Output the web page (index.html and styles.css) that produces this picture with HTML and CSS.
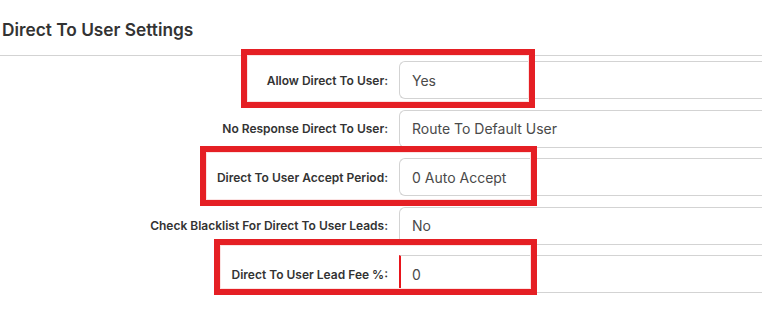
FILE: index.html
```html
<!DOCTYPE html>
<html>
<head>
<meta charset="utf-8">
<link rel="stylesheet" href="styles.css">
</head>
<body>
<div class="page">
  <h2 class="title">Direct To User Settings</h2>
  <div class="form">
    <label class="lbl">Allow Direct To User:</label>
    <div class="field">Yes</div>
    <label class="lbl">No Response Direct To User:</label>
    <div class="field">Route To Default User</div>
    <label class="lbl">Direct To User Accept Period:</label>
    <div class="field">0 Auto Accept</div>
    <label class="lbl">Check Blacklist For Direct To User Leads:</label>
    <div class="field">No</div>
    <label class="lbl">Direct To User Lead Fee %:</label>
    <div class="field field-error">0</div>
  </div>
  <div class="mark mark1"></div>
  <div class="mark mark2"></div>
  <div class="mark mark3"></div>
</div>
</body>
</html>
```
FILE: styles.css
```css
html, body {
  margin: 0;
  padding: 0;
  background: #fff;
  overflow: hidden;
}
.page {
  position: relative;
  width: 762px;
  height: 310px;
  overflow: hidden;
  font-family: Inter, "Noto Sans", sans-serif;
  color: #333;
}
.title {
  margin: 0;
  padding: 19px 0 0 2px;
  height: 36px;
  box-sizing: border-box;
  height: 56px;
  font-size: 17.3px;
  font-weight: 600;
  line-height: 22px;
  color: #333;
  border-bottom: 1px solid #d3d3d3;
}
.form {
  display: grid;
  grid-template-columns: 388px 1fr;
  column-gap: 11px;
  row-gap: 10.5px;
  padding-top: 5px;
}
.lbl {
  display: flex;
  align-items: center;
  justify-content: flex-end;
  font-size: 12px;
  font-weight: 600;
  color: #333;
}
.field {
  box-sizing: border-box;
  height: 38px;
  border: 1px solid #d3d3d3;
  border-right: none;
  border-radius: 6px 0 0 6px;
  padding: 0 12px;
  display: flex;
  align-items: center;
  font-size: 14px;
  color: #4a4a4a;
}
.field-error {
  border-left: 2px solid #e8141b;
  border-radius: 0;
  padding-left: 11px;
}
.mark {
  position: absolute;
  box-sizing: border-box;
  border: 6px solid #e51f24;
  box-shadow: inset 0 0 0 1px #fbe3e3;
}
.mark1 { left: 241px; top: 49px; width: 294px; height: 59px; }
.mark2 { left: 200px; top: 146px; width: 337px; height: 60px; }
.mark3 { left: 214px; top: 239px; width: 323px; height: 56px; }
```
